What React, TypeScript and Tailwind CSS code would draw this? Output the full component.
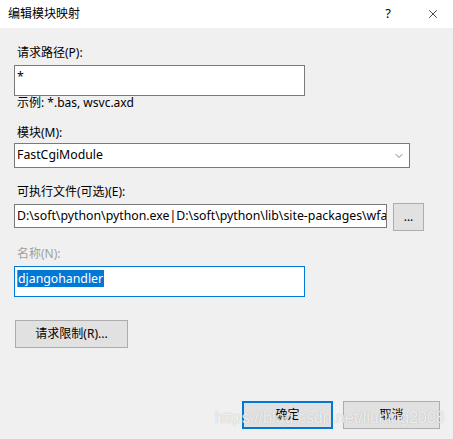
import { ChevronDown, X } from 'lucide-react'

const font = { fontFamily: '"Noto Sans", "Noto Sans CJK SC", sans-serif' }

function Label({ text, disabled }: { text: string; disabled?: boolean }) {
  return (
    <div className={`pl-[3px] text-[12px] leading-[16px] ${disabled ? 'text-[#a0a0a0]' : 'text-black'}`}>
      {text}
    </div>
  )
}

function App() {
  return (
    <div className="w-[453px] h-[439px] bg-[#f0f0f0] relative overflow-hidden" style={font}>
      {/* Title bar */}
      <div className="h-[28px] bg-white flex items-center pl-[8px]">
        <span className="text-[12px] text-black flex-1">编辑模块映射</span>
        <span className="text-[13px] text-black w-[20px] mr-[28px] text-center">?</span>
        <X className="w-[14px] h-[14px] mr-[13px] text-black" strokeWidth={1.2} />
      </div>

      {/* Body */}
      <div className="flex flex-col pl-[14px] pr-[13px] pt-[17px]">
        <Label text="请求路径(P):" />
        <div className="mt-[4px] w-[291px] h-[31px] bg-white border border-[#7a7a7a] px-[2px] pt-[3px] text-[12.3px] leading-[16px] text-black">
          *
        </div>
        <div className="text-[12px] leading-[14px] pl-[3px] text-black">示例: *.bas, wsvc.axd</div>

        <div className="mt-[15px]">
          <Label text="模块(M):" />
        </div>
        <div className="mt-[2px] w-[396px] h-[25px] bg-white border border-[#7a7a7a] flex items-center px-[2px]">
          <span className="flex-1 text-[12.3px] text-black">FastCgiModule</span>
          <ChevronDown className="w-[12px] h-[12px] mr-[2px] text-[#555]" strokeWidth={1.5} />
        </div>

        <div className="mt-[16px]">
          <Label text="可执行文件(可选)(E):" />
        </div>
        <div className="mt-[3px] flex items-start">
          <div className="mt-[1px] w-[373px] h-[24px] bg-white border border-[#7a7a7a] flex items-center px-[2px] overflow-hidden">
            <span className="whitespace-nowrap text-[12.3px] text-black">
              D:\soft\python\python.exe|D:\soft\python\lib\site-packages\wfastcgi.py
            </span>
          </div>
          <button className="ml-[6px] w-[31px] h-[28px] bg-[#e1e1e1] border border-[#adadad] text-[12px] leading-none text-black">
            ...
          </button>
        </div>

        <div className="mt-[15px]">
          <Label text="名称(N):" disabled />
        </div>
        <div className="mt-[4px] w-[291px] h-[31px] bg-white border border-[#0078d7] px-[2px] pt-[3px] flex items-start">
          <span className="w-[1px] h-[17px] bg-[#e07b20]" />
          <span className="bg-[#0078d7] text-white text-[12.3px] leading-[17px] pr-[1px]">djangohandler</span>
        </div>

        <button className="mt-[23px] ml-[1px] w-[113px] h-[28px] bg-[#e1e1e1] border border-[#adadad] text-[12px] text-black">
          请求限制(R)...
        </button>

        <div className="mt-[53px] flex justify-end gap-[10px]">
          <button className="w-[91px] h-[28px] bg-[#e1e1e1] border-2 border-[#0078d7] text-[12px] text-black">
            确定
          </button>
          <button className="w-[97px] h-[28px] bg-[#e1e1e1] border border-[#adadad] text-[12px] text-black">
            取消
          </button>
        </div>
      </div>

      {/* watermark */}
      <div
        className="absolute left-[215px] top-[407px] text-[16px] leading-[22px] text-white/80 whitespace-nowrap pointer-events-none"
        style={{ fontFamily: '"Liberation Sans", Arial, sans-serif', textShadow: '0 0 1px rgba(120,120,120,0.6)' }}
      >
        https://blog.csdn.net/liuning2008
      </div>
    </div>
  )
}

export default App
